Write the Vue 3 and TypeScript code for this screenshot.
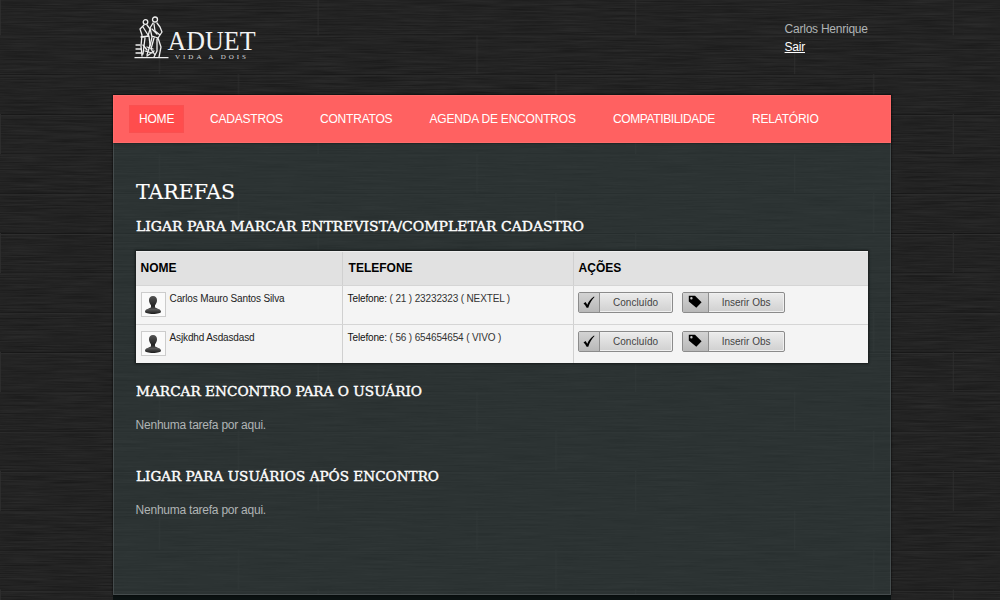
<script setup lang="ts">
interface Heading { text: string; width: number }
interface Task { name: string; phone: string }

const menu: string[] = ['HOME', 'CADASTROS', 'CONTRATOS', 'AGENDA DE ENCONTROS', 'COMPATIBILIDADE', 'RELATÓRIO']
const callHeading: Heading = { text: 'LIGAR PARA MARCAR ENTREVISTA/COMPLETAR CADASTRO', width: 448 }
const emptySections: Heading[] = [
  { text: 'MARCAR ENCONTRO PARA O USUÁRIO', width: 286 },
  { text: 'LIGAR PARA USUÁRIOS APÓS ENCONTRO', width: 303 },
]
const tasks: Task[] = [
  { name: 'Carlos Mauro Santos Silva', phone: '( 21 ) 23232323 ( NEXTEL )' },
  { name: 'Asjkdhd Asdasdasd', phone: '( 56 ) 654654654 ( VIVO )' },
]
</script>

<template>
  <div class="page">
    <svg class="wood" width="1000" height="600" aria-hidden="true">
      <defs>
        <filter id="grain" x="0" y="0" width="100%" height="100%" color-interpolation-filters="sRGB">
          <feTurbulence type="fractalNoise" baseFrequency="0.02 0.75" numOctaves="3" seed="4" />
          <feColorMatrix type="matrix" values="0.085 0 0 0 0.094  0.085 0 0 0 0.094  0.085 0 0 0 0.094  0 0 0 0 1" />
        </filter>
        <pattern id="planks" width="317.6" height="118.9" y="-4.8" patternUnits="userSpaceOnUse">
          <path d="M0 .5H318M0 40H318M0 79.6H318" stroke="#131313" stroke-width="1" />
          <path d="M0 1.5H318M0 41H318M0 80.6H318" stroke="#303030" stroke-width="1" />
          <path d="M.5 0V40M159.5 40V79M238.5 79V119" stroke="#303030" stroke-width="1" />
        </pattern>
      </defs>
      <rect width="1000" height="600" filter="url(#grain)" />
      <rect width="1000" height="600" fill="url(#planks)" opacity=".75" />
    </svg>

    <div class="content">
      <header class="top">
        <svg class="logo" width="124" height="48" viewBox="0 0 124 48">
          <g fill="none" stroke="#eee" stroke-width="1.3" stroke-linecap="round" stroke-linejoin="round">
            <circle cx="10.5" cy="7" r="2.3" />
            <circle cx="20" cy="4.500" r="2.500" />
            <path d="M9 10 5 14l2 6-1 11 1 10M12 10l3 4-2 7-5 1M8 12l5 8M6 22l8-1 1 9-3 10M10 23 8 39" />
            <path d="M18 8l-3 5 2 9-2 9M22 8l3 4 2 5-4 6M19 9l1 7 5 4M17 21l6 2 3 9-2 10M19 23l-3 11 4 6M22 24v12l-3 6" />
            <path d="M12 32l6 2M10 36l7 2M12 41l7-5M17 14l5 5M8 30l4 5" />
            <path d="M1 30h4M1 34h5M1 38h5M0 42.700h33" />
          </g>
          <text x="32.500" y="35" class="brand" textLength="88" lengthAdjust="spacingAndGlyphs">ADUET</text>
          <text x="40" y="43.600" class="tagline" textLength="71">VIDA A DOIS</text>
        </svg>
        <div class="user">
          <div>Carlos Henrique</div>
          <a>Sair</a>
        </div>
      </header>

      <main class="panel">
        <nav class="menu">
          <a v-for="(item, i) in menu" :key="item" :class="{ active: i === 0 }">{{ item }}</a>
        </nav>
        <div class="body">
          <h1>
            <svg width="300" height="24"><text x="0" y="19" textLength="99" lengthAdjust="spacingAndGlyphs">TAREFAS</text></svg>
          </h1>
          <h2>
            <svg width="500" height="20"><text x="0" y="14.700" :textLength="callHeading.width" lengthAdjust="spacingAndGlyphs">{{ callHeading.text }}</text></svg>
          </h2>
          <div class="table">
            <div class="row head"><div>NOME</div><div>TELEFONE</div><div>AÇÕES</div></div>
            <div v-for="task in tasks" :key="task.name" class="row">
              <div class="person">
                <span class="avatar">
                  <svg width="18" height="20" viewBox="0 0 18 20">
                    <defs>
                      <linearGradient id="bust" x1="0" y1="0" x2="0" y2="1"><stop offset="0" stop-color="#555" /><stop offset=".55" stop-color="#222" /><stop offset=".75" stop-color="#555" /><stop offset="1" stop-color="#1a1a1a" /></linearGradient>
                    </defs>
                    <path d="M9 1c2.600 0 4 1.700 4 4.300 0 2-1 3.700-2 4.900v2c1 1.300 6 1.500 6 4.600 0 1.300-3.500 2.200-8 2.200s-8-.9-8-2.200c0-3.100 5-3.300 6-4.600v-2C6 9 5 7.300 5 5.300 5 2.700 6.400 1 9 1z" fill="url(#bust)" />
                  </svg>
                </span>
                <span>{{ task.name }}</span>
              </div>
              <div class="phone"><b>Telefone:</b> {{ task.phone }}</div>
              <div class="actions">
                <button class="done">
                  <i><svg width="12" height="13" viewBox="0 0 12 13"><path d="M.5 7.400 2.600 6l1.700 2.700C5.700 5.300 7.800 2.500 11 .4l.5.7C8.700 4 6.800 7.300 5.300 11.800H3.600C2.900 10 2 8.700.5 7.400z" /></svg></i>
                  <span>Concluído</span>
                </button>
                <button class="note">
                  <i><svg width="14" height="14" viewBox="0 0 14 14"><path fill-rule="evenodd" d="M.8.8H7L13.600 7.300 8.300 12.800.8 6.600zM3.400 2a1.200 1.200 0 1 0 .01 2.400A1.200 1.200 0 0 0 3.400 2z" /></svg></i>
                  <span>Inserir Obs</span>
                </button>
              </div>
            </div>
          </div>
          <section v-for="section in emptySections" :key="section.text">
            <h2>
              <svg width="500" height="20"><text x="0" y="15" :textLength="section.width" lengthAdjust="spacingAndGlyphs">{{ section.text }}</text></svg>
            </h2>
            <p>Nenhuma tarefa por aqui.</p>
          </section>
        </div>
      </main>
    </div>
  </div>
</template>

<style>
body { background: #232323; overflow: hidden; }
</style>

<style scoped>
* { box-sizing: border-box; }
.page { position: relative; height: 600px; overflow: hidden; font: 12px "Liberation Sans", Arial, sans-serif; letter-spacing: -.24px; color: #b0b4b5; }
.wood { position: absolute; inset: 0; }
.content { position: relative; width: 778px; margin-left: 112.600px; }
.top { height: 95px; display: flex; justify-content: space-between; padding: 15px 0 0 22.400px; }
.logo { display: block; overflow: visible; letter-spacing: 0; }
.brand { font: 28px "Liberation Serif", serif; fill: #f2f2f2; }
.tagline { font: 7px "Liberation Serif", serif; fill: #d8d8d8; }
.user { width: 106px; padding-top: 5px; line-height: 18px; }
.user a { color: #fff; text-decoration: underline; }
.panel { height: 500px; background: rgba(51, 64, 64, .56); border: 1px solid #454c4d; border-top: 0; box-shadow: 0 0 2px #000, 0 5px 0 #0b1212; }
.menu { height: 48px; margin: 0 -1px; background: #ff6161; border: 1px solid #ff6c6b; box-shadow: 0 0 2px #101010; display: grid; grid-template-columns: 71px 110px 109.500px 183.500px 139px auto; align-content: center; padding-left: 15.400px; color: #fff; font-size: 12px; }
.menu a { justify-self: start; height: 28px; line-height: 27px; padding: 0 9px; border: 1px solid transparent; white-space: nowrap; letter-spacing: -.2px; }
.menu a:nth-child(5) { letter-spacing: -.38px; }
.menu .active { width: 55px; background: #ff4d4d; border-color: #f95050; }
.body { padding: 37px 22px 0; }
h1, h2 { margin: 0; font-weight: normal; letter-spacing: 0; }
h1 svg, h2 svg { display: block; fill: #fff; overflow: visible; }
h1 { height: 36px; font: 20.500px "DejaVu Serif", serif; }
h2 { height: 35px; font: 13.800px "DejaVu Serif", serif; }
h1 text { stroke: #fff; stroke-width: .15px; }
h2 text { stroke: #fff; stroke-width: .4px; }
.table { width: 732px; height: 112px; background: #f4f4f4; box-shadow: 0 0 2px 1px #161b1b; color: #222; font-size: 10px; letter-spacing: -.14px; }
.row { display: grid; grid-template-columns: 206px 231px 1fr; height: 39px; border-top: 1px solid #d5d5d5; }
.row > div + div { border-left: 1px solid #d0d0d0; }
.row.head { height: 34px; background: #e1e1e1; border-top: 1px solid #eee; color: #000; font-size: 12px; letter-spacing: 0; font-weight: bold; line-height: 32px; }
.head > div { padding-left: 6px; }
.head > div:first-child { padding-left: 5px; }
.head > div:last-child { padding-left: 5px; }
.person { display: flex; gap: 4px; padding: 6px 0 0 5px; line-height: 14px; }
.avatar { width: 25px; height: 25px; border: 1px solid #ccc; background: #fafafa; display: flex; align-items: center; justify-content: center; }
.phone { padding: 6px 0 0 5px; line-height: 14px; color: #333; }
.phone b { font-weight: normal; color: #111; }
.actions { display: flex; gap: 9px; padding: 6px 0 0 4px; }
button { height: 21px; padding: 0; border: 1px solid #8b8b8b; border-radius: 2px; display: flex; background: linear-gradient(#ececec, #d0d0d0); box-shadow: inset 0 0 0 1px #f0f0f0; font: 10px "Liberation Sans", Arial, sans-serif; color: #444; }
button i { height: 19px; border-right: 1px solid #8f8f8f; background: linear-gradient(#d3d3d3, #b8b8b8); display: flex; align-items: center; justify-content: center; }
button span { flex: 1; line-height: 19px; text-align: center; }
.done { width: 95px; }
.done i { width: 21px; }
.note { width: 103px; }
.note i { width: 26px; }
.note i svg { margin-bottom: 2px; }
section { height: 85px; padding-top: 18px; }
section h2 { height: 28px; }
section p { margin: 7px 0 0; line-height: 18px; }
</style>
